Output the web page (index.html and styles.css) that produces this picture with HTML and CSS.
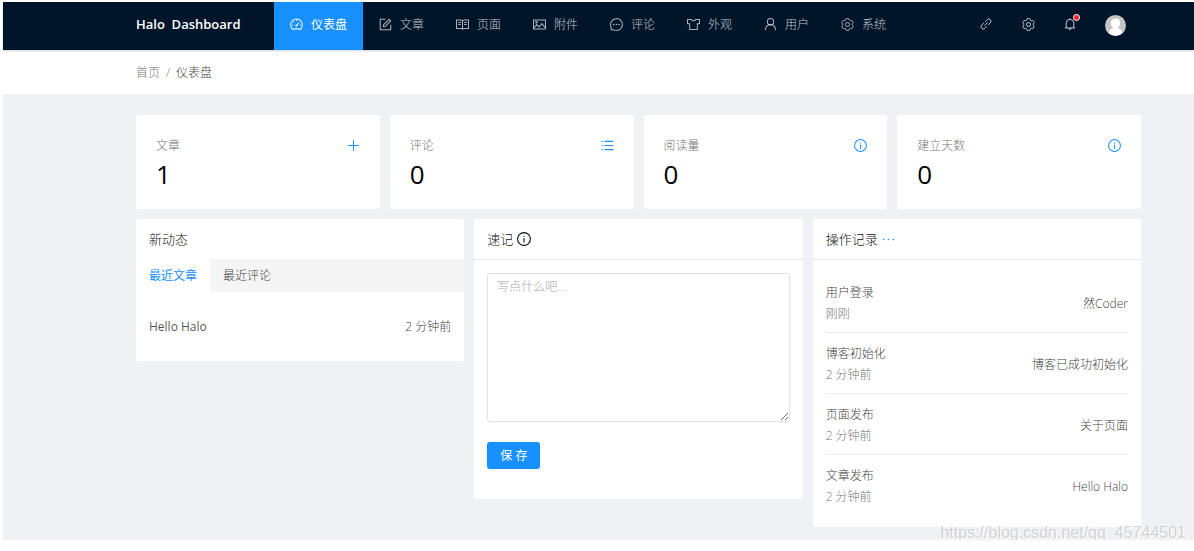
FILE: index.html
```
<!DOCTYPE html>
<html lang="zh-CN">
<head>
<meta charset="utf-8">
<meta name="viewport" content="width=device-width, initial-scale=1">
<title>仪表盘 - Halo Dashboard</title>
<link rel="stylesheet" href="styles.css">
</head>
<body>
<svg class="sprite" aria-hidden="true">
  <symbol id="i-dashboard" viewBox="64 64 896 896"><path d="M260 856A405 405 0 1 1 764 856Q740 872 715 856Q512 735 309 856Q284 872 260 856Z"/><path d="M512 190V275M200 545H275M749 545H824M290 322l52 52M512 580L690 385"/><circle cx="500" cy="590" r="35"/></symbol>
  <symbol id="i-form" viewBox="64 64 896 896"><path d="M500 148H148V876H876V524"/><path d="M362 664l8-122L742 170q20-20 40 0l72 72q20 20 0 40L484 654Z"/></symbol>
  <symbol id="i-read" viewBox="64 64 896 896"><path d="M512 245Q455 198 375 198H98V790H375Q455 790 512 835Q569 790 649 790H926V198H649Q569 198 512 245V830M220 375H400M220 520H400M624 375H804M624 520H804"/></symbol>
  <symbol id="i-picture" viewBox="64 64 896 896"><path d="M98 194H926V830H98ZM135 745L330 510L485 690L680 450L890 710"/><circle cx="304" cy="360" r="55"/></symbol>
  <symbol id="i-message" viewBox="64 64 896 896"><path d="M145 880V690A408 408 0 1 1 335 880Z"/><path class="dots" d="M330 512h4M510 512h4M690 512h4"/></symbol>
  <symbol id="i-skin" viewBox="64 64 896 896"><path d="M98 165H365Q390 270 512 270T659 165H926V465H775V860H249V465H98Z"/></symbol>
  <symbol id="i-user" viewBox="64 64 896 896"><circle cx="512" cy="320" r="215"/><path d="M165 900Q180 535 512 535T859 900"/></symbol>
  <symbol id="i-setting" viewBox="30 30 964 964"><path d="M924.8 625.7l-65.5-56c3.1-19 4.7-38.4 4.7-57.8s-1.6-38.8-4.7-57.8l65.5-56a32 32 0 0 0 9.3-35.2l-.9-2.6a443.7 443.7 0 0 0-79.7-137.9l-1.8-2.1a32 32 0 0 0-35.1-9.5l-81.3 28.9c-30-24.6-63.5-44-99.7-57.6l-15.7-85a32 32 0 0 0-25.8-25.7l-2.7-.5c-52.1-9.4-106.9-9.4-159 0l-2.7.5a32 32 0 0 0-25.8 25.7l-15.8 85.4a351.9 351.9 0 0 0-99 57.4l-81.9-29.1a32 32 0 0 0-35.1 9.5l-1.8 2.1a446 446 0 0 0-79.7 137.9l-.9 2.6c-4.5 12.5-.8 26.5 9.3 35.2l66.3 56.6c-3.1 18.8-4.6 38-4.6 57.1 0 19.2 1.5 38.4 4.6 57.1L99 625.5a32 32 0 0 0-9.3 35.2l.9 2.6c18.1 50.4 44.9 96.9 79.7 137.9l1.8 2.1a32 32 0 0 0 35.1 9.5l81.9-29.1c29.8 24.5 63.1 43.9 99 57.4l15.8 85.4a32 32 0 0 0 25.8 25.7l2.7.5a449.4 449.4 0 0 0 159 0l2.7-.5a32 32 0 0 0 25.8-25.7l15.7-85a350 350 0 0 0 99.7-57.6l81.3 28.9a32 32 0 0 0 35.1-9.5l1.8-2.1c34.8-41.1 61.6-87.5 79.7-137.9l.9-2.6c4.5-12.3.8-26.3-9.3-35z"/><circle cx="512" cy="512" r="150"/></symbol>
  <symbol id="i-link" viewBox="64 64 896 896"><path d="M440 350L595 195C670 120 770 125 835 190S900 355 830 428L675 583M350 440L195 595C120 670 125 770 190 835S355 900 428 830L583 675M395 629L629 395"/></symbol>
  <symbol id="i-bell" viewBox="64 64 896 896"><path d="M512 90V160M130 805H894M230 805V445A282 282 0 0 1 794 445V805M420 830A92 92 0 0 0 604 830"/></symbol>
  <symbol id="i-plus" viewBox="64 64 896 896"><path d="M512 150V874M150 512H874"/></symbol>
  <symbol id="i-list" viewBox="64 64 896 896"><path d="M304 228H920M304 512H920M304 796H920M105 228H185M105 512H185M105 796H185"/></symbol>
  <symbol id="i-info" viewBox="64 64 896 896"><circle cx="512" cy="512" r="410"/><path d="M512 455V735M512 300V375"/></symbol>
  <symbol id="i-more" viewBox="64 64 896 896"><path class="dots" d="M174 512h4M510 512h4M846 512h4"/></symbol>
</svg>
<div class="app">
  <header class="header">
    <h1 class="brand">Halo&nbsp; Dashboard</h1>
    <nav class="nav">
      <a class="nav-item active" href="#"><svg class="icon"><use href="#i-dashboard"/></svg>仪表盘</a>
      <a class="nav-item" href="#"><svg class="icon"><use href="#i-form"/></svg>文章</a>
      <a class="nav-item" href="#"><svg class="icon"><use href="#i-read"/></svg>页面</a>
      <a class="nav-item" href="#"><svg class="icon"><use href="#i-picture"/></svg>附件</a>
      <a class="nav-item" href="#"><svg class="icon"><use href="#i-message"/></svg>评论</a>
      <a class="nav-item" href="#"><svg class="icon"><use href="#i-skin"/></svg>外观</a>
      <a class="nav-item" href="#"><svg class="icon"><use href="#i-user"/></svg>用户</a>
      <a class="nav-item" href="#"><svg class="icon"><use href="#i-setting"/></svg>系统</a>
    </nav>
    <div class="tools">
      <a class="tool" href="#" aria-label="打开站点"><svg class="icon small"><use href="#i-link"/></svg></a>
      <button class="tool" type="button" aria-label="设置"><svg class="icon"><use href="#i-setting"/></svg></button>
      <button class="tool" type="button" aria-label="通知"><span class="bell"><svg class="icon small"><use href="#i-bell"/></svg><span class="dot"></span></span></button>
      <button class="tool user" type="button" aria-label="用户菜单">
        <svg class="avatar" viewBox="0 0 42 42"><circle cx="21" cy="21" r="21" fill="#c5c5c5"/><path d="M7 36Q10 27 17 26Q11 23 12 14Q13 7 21 7T30 14Q31 23 25 26Q32 27 35 36A21 21 0 0 1 7 36Z" fill="#fff"/></svg>
      </button>
    </div>
  </header>
  <nav class="breadcrumb" aria-label="面包屑"><a href="#">首页</a><span class="sep">/</span><span>仪表盘</span></nav>
  <main class="content">
    <section class="stats">
      <article class="card stat"><div class="stat-head"><h2>文章</h2><a href="#" aria-label="写文章"><svg class="icon"><use href="#i-plus"/></svg></a></div><p class="number">1</p></article>
      <article class="card stat"><div class="stat-head"><h2>评论</h2><a href="#" aria-label="查看评论"><svg class="icon"><use href="#i-list"/></svg></a></div><p class="number">0</p></article>
      <article class="card stat"><div class="stat-head"><h2>阅读量</h2><a href="#" aria-label="阅读量说明"><svg class="icon"><use href="#i-info"/></svg></a></div><p class="number">0</p></article>
      <article class="card stat"><div class="stat-head"><h2>建立天数</h2><a href="#" aria-label="建立天数说明"><svg class="icon"><use href="#i-info"/></svg></a></div><p class="number">0</p></article>
    </section>
    <section class="panels">
      <article class="card">
        <h2 class="card-title">新动态</h2>
        <div class="tabs" role="tablist">
          <button class="tab selected" type="button" role="tab" aria-selected="true">最近文章</button>
          <button class="tab" type="button" role="tab" aria-selected="false">最近评论</button>
        </div>
        <div class="posts"><a class="post" href="#">Hello Halo</a><span>2 分钟前</span></div>
      </article>
      <article class="card">
        <h2 class="card-title ruled"><label for="note">速记</label><svg class="icon large"><use href="#i-info"/></svg></h2>
        <form class="note">
          <textarea id="note" placeholder="写点什么吧..."></textarea>
          <button class="save" type="button">保 存</button>
        </form>
      </article>
      <article class="card">
        <h2 class="card-title ruled">操作记录<a href="#" aria-label="更多"><svg class="icon"><use href="#i-more"/></svg></a></h2>
        <ul class="logs">
          <li><div><h3>用户登录</h3><p>刚刚</p></div><span>然Coder</span></li>
          <li><div><h3>博客初始化</h3><p>2 分钟前</p></div><span>博客已成功初始化</span></li>
          <li><div><h3>页面发布</h3><p>2 分钟前</p></div><span>关于页面</span></li>
          <li><div><h3>文章发布</h3><p>2 分钟前</p></div><span>Hello Halo</span></li>
        </ul>
      </article>
    </section>
    <div class="watermark">https://blog.csdn.net/qq_45744501</div>
  </main>
</div>
</body>
</html>
```
FILE: styles.css
```
* { box-sizing: border-box; }
body {
  margin: 0;
  padding: 2px 0 0 3px;
  background: #fff;
  color: rgba(0, 0, 0, .8);
  font: 300 12px/21px "Open Sans", "Noto Sans CJK SC", sans-serif;
}
h1, h2, h3, p, ul { margin: 0; padding: 0; font: inherit; list-style: none; }
a { color: #1890ff; text-decoration: none; }
button, textarea { font: inherit; }
button { border: 0; background: none; cursor: pointer; }
.sprite { position: absolute; width: 0; height: 0; }
.icon {
  display: block;
  flex: none;
  width: 13px;
  height: 13px;
  fill: none;
  stroke: currentColor;
  stroke-width: 70;
}
.small { width: 12px; height: 12px; }
.dots { stroke-width: 110; stroke-linecap: round; }

.header, .breadcrumb, .content { padding-left: 133px; padding-right: 53px; }
.header {
  display: flex;
  height: 48px;
  background: #001529;
  box-shadow: 0 1px 2px rgba(0, 21, 41, .2);
}
.brand { width: 138px; color: #fff; font-size: 13px; font-weight: 600; line-height: 44px; white-space: nowrap; }
.nav { display: flex; flex: 1; }
.nav-item {
  display: flex;
  align-items: center;
  gap: 8px;
  padding: 0 16px 4px;
  color: rgba(255, 255, 255, .75);
  white-space: nowrap;
}
.nav-item .icon { opacity: .9; }
.nav-item.active { background: #1890ff; color: #fff; font-weight: 400; }
.tools { display: flex; }
.tool {
  display: flex;
  align-items: center;
  justify-content: center;
  width: 42px;
  padding: 0 0 4px;
  color: rgba(255, 255, 255, .8);
}
.tool.user { justify-content: flex-end; width: 50px; padding: 0 15px 1px 0; }
.bell { position: relative; }
.dot {
  position: absolute;
  top: -4px;
  right: -4px;
  width: 7px;
  height: 7px;
  border: 1px solid #fff;
  border-radius: 50%;
  background: #f5222d;
}
.avatar { width: 21px; height: 21px; }

.breadcrumb { display: flex; align-items: center; height: 44px; }
.breadcrumb a, .sep { color: rgba(0, 0, 0, .6); }
.sep { margin: 0 6px; }

.content { position: relative; padding-top: 21px; padding-bottom: 13px; background: #f0f1f5; }
.card { overflow: hidden; border-radius: 2px; background: #fff; }
.stats, .panels { display: grid; gap: 10px; align-items: start; }
.stats { grid-template-columns: repeat(4, 1fr); margin-bottom: 10px; }
.panels { grid-template-columns: repeat(3, 1fr); }
.stat { padding: 20px 20px 17px; }
.stat-head { display: flex; align-items: center; justify-content: space-between; color: rgba(0, 0, 0, .6); }
.stat-head .icon, .card-title a .icon { stroke: #1890ff; }
.number { color: #000; font-size: 26px; font-weight: 400; line-height: 36px; }

.card-title {
  display: flex;
  align-items: center;
  gap: 4px;
  height: 40px;
  padding: 0 13px;
  color: rgba(0, 0, 0, .95);
  font-size: 13px;
}
.ruled { height: 41px; border-bottom: 1px solid #e8e8e8; }
.large { width: 14px; height: 14px; }
.tabs { display: flex; background: #f5f5f5; }
.tab { padding: 6px 13px; color: inherit; }
.tab.selected { border-radius: 2px 2px 0 0; background: #fff; color: #1890ff; font-weight: 400; }
.posts { display: flex; justify-content: space-between; padding: 24px 13px; }
.post { color: rgba(0, 0, 0, .7); font-weight: 500; }

.note { display: flex; flex-direction: column; align-items: flex-start; gap: 20px; padding: 13px 13px 30px; }
.note textarea {
  display: block;
  width: 100%;
  height: 149px;
  padding: 2px 9px;
  border: 1px solid #e2e2e2;
  border-radius: 3px;
  background: #fff;
  color: inherit;
  resize: vertical;
}
.note textarea::placeholder { color: #a6a6a6; }
.save { padding: 3px 13px; border-radius: 3px; background: #1890ff; color: #fff; font-weight: 400; }

.logs { padding: 12px 13px; }
.logs li { display: flex; align-items: center; justify-content: space-between; padding: 10px 0 8px; }
.logs li + li { border-top: 1px solid #ededed; }
.logs p { color: rgba(0, 0, 0, .6); }

.watermark {
  position: absolute;
  right: 8px;
  bottom: -3px;
  color: rgba(200, 200, 200, .8);
  font: 16px/20px "Liberation Sans", Arial, sans-serif;
  text-shadow: 1px 1px 0 #fff;
}
```
